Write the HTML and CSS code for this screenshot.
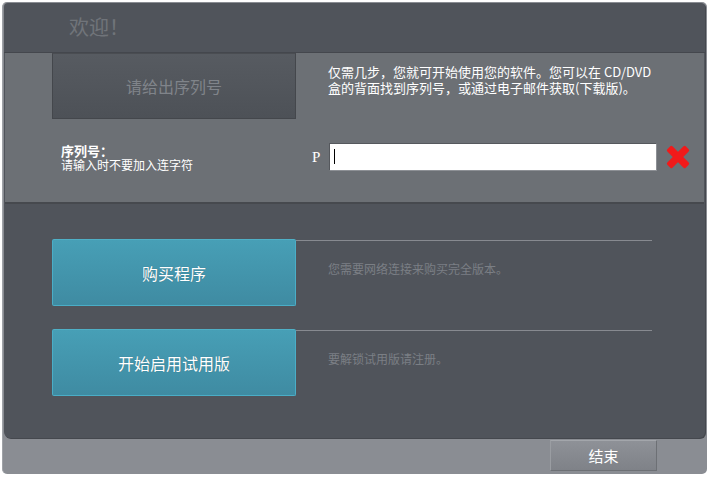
FILE: index.html
```html
<!DOCTYPE html>
<html lang="zh">
<head>
<meta charset="utf-8">
<title>欢迎</title>
<link rel="stylesheet" href="styles.css">
</head>
<body>
<div class="window">
  <div class="main">
    <div class="header"><span class="title">欢迎！</span></div>
    <div class="panel">
      <div class="top-row">
        <div class="ghost-btn">请给出序列号</div>
        <div class="desc">
          <div class="desc-line">仅需几步，您就可开始使用您的软件。您可以在 CD/DVD</div>
          <div class="desc-line">盒的背面找到序列号，或通过电子邮件获取(下载版)。</div>
        </div>
      </div>
      <div class="serial-row">
        <div class="label">
          <div class="label-main">序列号：</div>
          <div class="label-sub">请输入时不要加入连字符</div>
        </div>
        <span class="prefix">P</span>
        <div class="input"><span class="caret"></span></div>
        <svg class="clear" width="24" height="24" viewBox="0 0 24 24">
          <g transform="translate(12 12) rotate(45)">
            <rect x="-13" y="-3.6" width="26" height="7.2" rx="1.5" fill="#f11a1a"/>
            <rect x="-3.6" y="-13" width="7.2" height="26" rx="1.5" fill="#f11a1a"/>
          </g>
        </svg>
      </div>
    </div>
    <div class="actions">
      <div class="action-row">
        <div class="teal-btn">购买程序</div>
        <div class="action-info">您需要网络连接来购买完全版本。</div>
      </div>
      <div class="action-row">
        <div class="teal-btn">开始启用试用版</div>
        <div class="action-info">要解锁试用版请注册。</div>
      </div>
    </div>
  </div>
  <div class="footer">
    <div class="end-btn">结束</div>
  </div>
</div>
</body>
</html>
```

FILE: styles.css
```css
* { box-sizing: border-box; }
html, body {
  margin: 0;
  padding: 0;
  background: #ffffff;
  font-family: "Noto Sans CJK SC", "Noto Sans", sans-serif;
}
.window {
  margin: 2px 0 0 2px;
  width: 705px;
  height: 472px;
  background: #8a8d93;
  border-radius: 5px;
  border-left: 1px solid #9fa2a7;
  display: flex;
  flex-direction: column;
  padding: 1px 2px 0 1px;
}
.main {
  height: 435px;
  background: #50545b;
  border-radius: 4px 4px 6px 6px;
  display: flex;
  flex-direction: column;
  box-shadow: 1px 1px 0 #45484e;
}
.header {
  height: 50px;
  border-bottom: 1px solid #44474d;
  padding: 12px 0 0 65px;
}
.title {
  font-size: 20px;
  line-height: 24px;
  color: #70747a;
}
.panel {
  height: 151px;
  margin: 0 1px;
  background: #6c7075;
  border-bottom: 2px solid #46494e;
  padding-left: 47px;
}
.top-row {
  display: flex;
  height: 66px;
}
.ghost-btn {
  width: 244px;
  height: 66px;
  background: linear-gradient(#575b61, #4d5157);
  border: 1px solid #44474c;
  border-top-color: #4a4d52;
  color: #80848a;
  font-size: 16px;
  display: flex;
  align-items: center;
  justify-content: center;
}
.desc {
  margin-left: 32px;
  padding-top: 11px;
  display: flex;
  flex-direction: column;
  gap: 1px;
  font-size: 13px;
  line-height: 15px;
  color: #ffffff;
}
.serial-row {
  margin-top: 24px;
  height: 28px;
  display: flex;
  align-items: center;
}
.label {
  width: 260px;
  padding: 0 0 0 9px;
  color: #ffffff;
}
.label-main {
  font-size: 13px;
  font-weight: bold;
  line-height: 15px;
}
.label-sub {
  font-size: 12px;
  line-height: 14px;
}
.prefix {
  width: 17px;
  font-family: "Liberation Serif", serif;
  font-size: 15px;
  color: #ffffff;
}
.input {
  width: 328px;
  height: 28px;
  background: #ffffff;
  border: 1px solid #8d9095;
  border-top-color: #55585d;
  border-left-color: #55585d;
  padding: 5px 0 0 4px;
}
.caret {
  display: block;
  width: 1px;
  height: 15px;
  background: #000000;
}
.clear {
  margin-left: 9px;
}
.actions {
  flex: 1;
  padding: 35px 0 0 48px;
  display: flex;
  flex-direction: column;
  gap: 23px;
}
.action-row {
  display: flex;
  height: 67px;
}
.teal-btn {
  width: 244px;
  height: 67px;
  background: linear-gradient(#479fb6, #3f8ba2);
  border: 1px solid #4aaec7;
  border-top-color: #4fb0c6;
  border-radius: 2px;
  color: #ffffff;
  font-size: 16px;
  display: flex;
  align-items: center;
  justify-content: center;
  text-shadow: 0 0 1px rgba(0,0,0,0.3);
}
.action-info {
  width: 356px;
  border-top: 1px solid #878a90;
  margin-top: 1px;
  padding: 20px 0 0 32px;
  font-size: 12px;
  line-height: 16px;
  color: #7b7f85;
}
.footer {
  flex: 1;
  display: flex;
  justify-content: flex-end;
  padding: 2px 48px 0 0;
}
.end-btn {
  width: 107px;
  height: 31px;
  background: linear-gradient(#8e9197, #7f8288);
  border: 1px solid #6d7075;
  border-top-color: #a3a6ab;
  border-left-color: #9a9da2;
  color: #ffffff;
  font-size: 15px;
  display: flex;
  align-items: center;
  justify-content: center;
}
```
